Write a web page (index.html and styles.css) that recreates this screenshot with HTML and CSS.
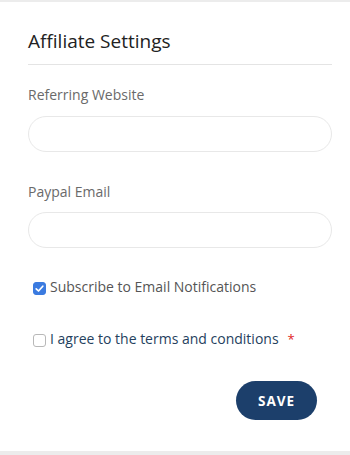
FILE: index.html
```html
<!DOCTYPE html>
<html lang="en">
<head>
<meta charset="utf-8">
<title>Affiliate Settings</title>
<link rel="stylesheet" href="styles.css">
</head>
<body>
<div class="card">
  <div class="header">
    <h2 class="title">Affiliate Settings</h2>
  </div>
  <form class="form">
    <div class="field field-first">
      <label class="label">Referring Website</label>
      <input class="input" type="text">
    </div>
    <div class="field">
      <label class="label">Paypal Email</label>
      <input class="input" type="email">
    </div>
    <div class="check check-first">
      <span class="box box-on">
        <svg viewBox="0 0 13 13" width="13" height="13"><path d="M3.2 6.8 L5.5 9 L9.8 4.2" fill="none" stroke="#fff" stroke-width="1.7" stroke-linecap="round" stroke-linejoin="round"/></svg>
      </span>
      <span class="check-text">Subscribe to Email Notifications</span>
    </div>
    <div class="check check-terms">
      <span class="box"></span>
      <span class="check-text terms-text">I agree to the terms and conditions</span>
      <span class="req">*</span>
    </div>
    <div class="actions">
      <button class="save" type="button">SAVE</button>
    </div>
  </form>
</div>
</body>
</html>
```
FILE: styles.css
```css
html, body {
  margin: 0;
  padding: 0;
}
body {
  background: #ececec;
  font-family: "Open Sans", "Liberation Sans", sans-serif;
}
.card {
  margin-top: 2px;
  height: 449px;
  box-sizing: border-box;
  background: #fff;
  padding: 27px 18px 0 28px;
}
.header {
  border-bottom: 1px solid #e4e4e4;
  padding-bottom: 11px;
}
.title {
  margin: 0;
  font-size: 19px;
  line-height: 24px;
  font-weight: 400;
  color: #222;
}
.form {
  display: flex;
  flex-direction: column;
}
.field {
  display: flex;
  flex-direction: column;
  margin-top: 30px;
}
.field-first {
  margin-top: 20px;
}
.label {
  font-size: 14px;
  line-height: 20px;
  color: #6a6a6a;
  margin-bottom: 11px;
}
.field + .field .label {
  margin-bottom: 10px;
}
.input {
  box-sizing: border-box;
  height: 36px;
  width: 100%;
  border: 1px solid #e8e8e8;
  border-radius: 18px;
  background: #fff;
  outline: none;
  padding: 0 16px;
  font: inherit;
}
.check {
  display: flex;
  align-items: flex-start;
  font-size: 14px;
  line-height: 20px;
}
.check-first {
  margin-top: 29px;
}
.check-terms {
  margin-top: 32px;
}
.box {
  box-sizing: border-box;
  width: 13px;
  height: 13px;
  margin: 5px 4px 0 5px;
  border: 1px solid #b8b8b8;
  border-radius: 3px;
  display: flex;
}
.box-on {
  background: #3b7be0;
  border-color: #3b7be0;
}
.box svg {
  margin: -1px;
}
.check-text {
  color: #555;
}
.terms-text {
  color: #253f5e;
}
.req {
  color: #e02424;
  margin-left: 9px;
  font-size: 13px;
}
.actions {
  display: flex;
  justify-content: flex-end;
  margin-top: 32px;
  padding-right: 15px;
}
.save {
  width: 81px;
  height: 39px;
  border: none;
  border-radius: 20px;
  background: #1c3f6b;
  color: #fff;
  font-family: inherit;
  font-size: 13.5px;
  font-weight: 700;
  letter-spacing: 1px;
  padding: 0;
}
```
